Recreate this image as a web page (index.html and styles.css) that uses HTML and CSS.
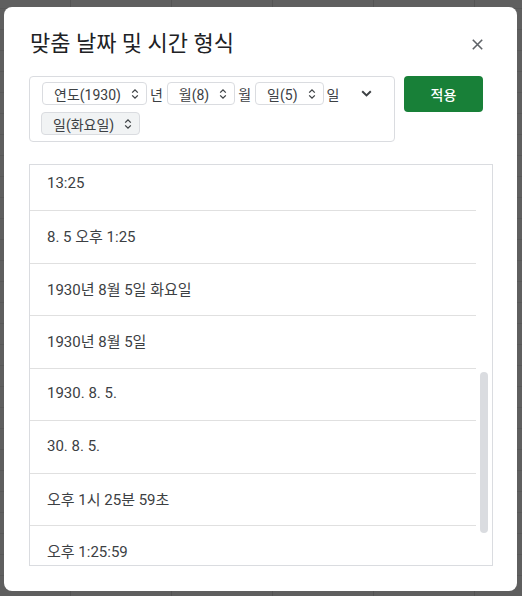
FILE: index.html
```html
<!DOCTYPE html>
<html lang="ko">
<head>
<meta charset="utf-8">
<title>맞춤 날짜 및 시간 형식</title>
<link rel="stylesheet" href="styles.css">
</head>
<body>
<div class="dialog">
  <div class="header">
    <h1 class="title">맞춤 날짜 및 시간 형식</h1>
    <button class="close" aria-label="닫기">
      <svg width="11" height="11" viewBox="0 0 11 11"><path d="M0.8 0.8 L10.2 10.2 M10.2 0.8 L0.8 10.2" stroke="#5f6368" stroke-width="1.6" fill="none"/></svg>
    </button>
  </div>
  <div class="toolbar">
    <div class="builder">
      <div class="fields">
        <div class="field-row">
          <span class="chip">연도(1930)<svg class="updown" width="8" height="12" viewBox="0 0 8 12"><path d="M1.2 4.6 L4 1.8 L6.8 4.6 M1.2 7.4 L4 10.2 L6.8 7.4" stroke="#3c4043" stroke-width="1.3" fill="none"/></svg></span>
          <span class="unit">년</span>
          <span class="chip">월(8)<svg class="updown" width="8" height="12" viewBox="0 0 8 12"><path d="M1.2 4.6 L4 1.8 L6.8 4.6 M1.2 7.4 L4 10.2 L6.8 7.4" stroke="#3c4043" stroke-width="1.3" fill="none"/></svg></span>
          <span class="unit">월</span>
          <span class="chip">일(5)<svg class="updown" width="8" height="12" viewBox="0 0 8 12"><path d="M1.2 4.6 L4 1.8 L6.8 4.6 M1.2 7.4 L4 10.2 L6.8 7.4" stroke="#3c4043" stroke-width="1.3" fill="none"/></svg></span>
          <span class="unit">일</span>
        </div>
        <div class="field-row">
          <span class="chip chip-active">일(화요일)<svg class="updown" width="8" height="12" viewBox="0 0 8 12"><path d="M1.2 4.6 L4 1.8 L6.8 4.6 M1.2 7.4 L4 10.2 L6.8 7.4" stroke="#3c4043" stroke-width="1.3" fill="none"/></svg></span>
        </div>
      </div>
      <span class="expand">
        <svg width="11" height="7" viewBox="0 0 11 7"><path d="M1.2 1.2 L5.5 5.4 L9.8 1.2" stroke="#3c4043" stroke-width="2" fill="none"/></svg>
      </span>
    </div>
    <button class="apply">적용</button>
  </div>
  <div class="list">
    <div class="rows">
      <div class="rows-inner">
        <div class="row">13:25</div>
        <div class="row">8. 5 오후 1:25</div>
        <div class="row">1930년 8월 5일 화요일</div>
        <div class="row">1930년 8월 5일</div>
        <div class="row">1930. 8. 5.</div>
        <div class="row">30. 8. 5.</div>
        <div class="row">오후 1시 25분 59초</div>
        <div class="row">오후 1:25:59</div>
      </div>
    </div>
    <div class="track"><div class="thumb"></div></div>
  </div>
</div>
</body>
</html>
```

FILE: styles.css
```css
* { box-sizing: border-box; }

html, body {
  margin: 0;
  padding: 0;
}

body {
  width: 522px;
  height: 596px;
  overflow: hidden;
  background-color: #5f5f5f;
  background-image:
    linear-gradient(to right, #545454 1px, transparent 1px),
    linear-gradient(to bottom, #585858 1px, transparent 1px);
  background-size: 101px 100%, 100% 21px;
  background-position: 70px 0, 0 8px;
  font-family: Roboto, "Noto Sans CJK KR", sans-serif;
  color: #3c4043;
}

.dialog {
  margin: 7px 0 0 4px;
  width: 513px;
  height: 584px;
  background: #ffffff;
  border-radius: 8px;
  padding: 23px 24px 25px 25px;
  display: flex;
  flex-direction: column;
}

.header {
  height: 28px;
  display: flex;
  align-items: center;
  justify-content: space-between;
}

.title {
  margin: 0 0 0 1px;
  font-size: 22px;
  line-height: 28px;
  font-weight: 400;
  color: #202124;
  font-family: Roboto, "Noto Sans CJK KR", sans-serif;
}

.close {
  border: 0;
  background: none;
  padding: 0;
  width: 11px;
  height: 11px;
  margin-right: 10px;
  display: flex;
}

.toolbar {
  margin-top: 18px;
  display: flex;
  align-items: flex-start;
}

.builder {
  width: 366px;
  height: 66px;
  border: 1px solid #dadce0;
  border-radius: 4px;
  padding: 5px 0 0 12px;
  display: flex;
  align-items: flex-start;
}

.fields {
  width: 310px;
  display: flex;
  flex-direction: column;
  gap: 7px;
}

.field-row {
  display: flex;
  align-items: center;
}

.chip {
  height: 23px;
  display: inline-flex;
  align-items: center;
  gap: 10px;
  border: 1px solid #dadce0;
  border-radius: 4px;
  padding: 0 7px 0 11px;
  font-size: 14px;
  color: #3c4043;
  background: #ffffff;
  flex-shrink: 0;
}

.chip-active {
  background: #f1f3f4;
  margin-left: -1px;
}

.updown { display: block; }

.unit {
  font-size: 14px;
  margin: 0 4px 0 3px;
  color: #3c4043;
  flex-shrink: 0;
}

.expand {
  margin-left: 9px;
  height: 23px;
  display: flex;
  align-items: center;
}

.apply {
  margin-left: 9px;
  width: 79px;
  height: 36px;
  border: 0;
  border-radius: 4px;
  background: #188038;
  color: #ffffff;
  font-family: Roboto, "Noto Sans CJK KR", sans-serif;
  font-size: 14px;
  font-weight: 500;
}

.list {
  margin-top: 22px;
  width: 464px;
  height: 402px;
  border: 1px solid #dadce0;
  display: flex;
}

.rows {
  width: 446px;
  overflow: hidden;
}

.rows-inner {
  margin-top: -6.5px;
}

.row {
  height: 52.5px;
  border-bottom: 1px solid #e0e0e0;
  padding: 0 0 2px 17px;
  display: flex;
  align-items: center;
  font-size: 15px;
  color: #3c4043;
}

.track {
  width: 16px;
  padding: 207px 0 0 4px;
}

.thumb {
  width: 8px;
  height: 161px;
  border-radius: 4px;
  background: #dadce0;
}
```
